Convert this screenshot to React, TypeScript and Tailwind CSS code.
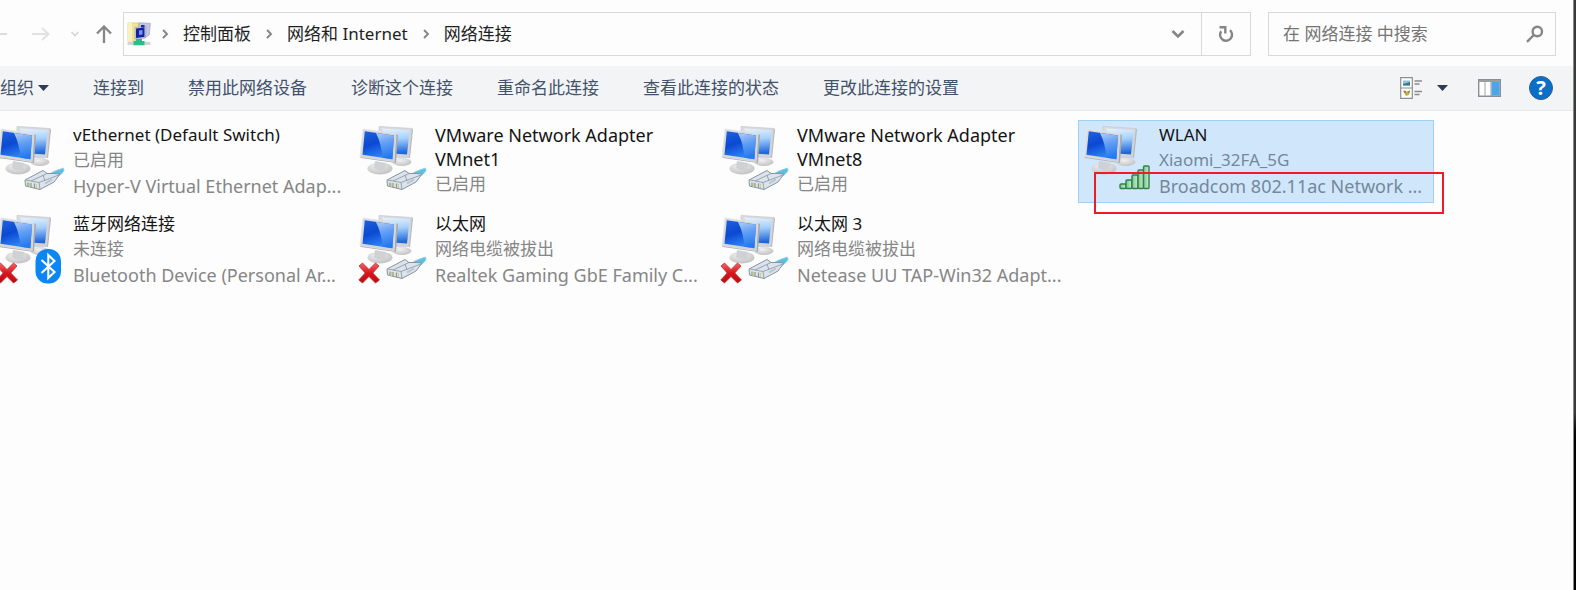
import type { ReactNode } from "react";

type Badge = "plug" | "bluetooth" | "wifi";

interface Connection {
  name: string;
  status: string;
  device?: string;
  badge: Badge;
  offline?: boolean;
  selected?: boolean;
}

const connections: Connection[] = [
  { name: "vEthernet (Default Switch)", status: "已启用", device: "Hyper-V Virtual Ethernet Adap...", badge: "plug" },
  { name: "VMware Network Adapter VMnet1", status: "已启用", badge: "plug" },
  { name: "VMware Network Adapter VMnet8", status: "已启用", badge: "plug" },
  { name: "WLAN", status: "Xiaomi_32FA_5G", device: "Broadcom 802.11ac Network ...", badge: "wifi", selected: true },
  { name: "蓝牙网络连接", status: "未连接", device: "Bluetooth Device (Personal Ar...", badge: "bluetooth", offline: true },
  { name: "以太网", status: "网络电缆被拔出", device: "Realtek Gaming GbE Family C...", badge: "plug", offline: true },
  { name: "以太网 3", status: "网络电缆被拔出", device: "Netease UU TAP-Win32 Adapt...", badge: "plug", offline: true },
];

const commands = ["连接到", "禁用此网络设备", "诊断这个连接", "重命名此连接", "查看此连接的状态", "更改此连接的设置"];

function Defs() {
  return (
    <svg width="0" height="0" className="absolute" aria-hidden="true">
      <defs>
        <linearGradient id="screen" x1="0" y1="0" x2="0.4" y2="1">
          <stop offset="0" stopColor="#1f63dc" />
          <stop offset="0.5" stopColor="#0b49d2" />
          <stop offset="1" stopColor="#2f86f6" />
        </linearGradient>
        <linearGradient id="glare" x1="0" y1="0" x2="0.2" y2="1">
          <stop offset="0" stopColor="#cfe6ff" />
          <stop offset="0.5" stopColor="#6ba8f8" />
          <stop offset="1" stopColor="#2277f0" />
        </linearGradient>
        <linearGradient id="back" x1="0" y1="0" x2="0.1" y2="1">
          <stop offset="0" stopColor="#e6f3ff" />
          <stop offset="0.45" stopColor="#a5d0fb" />
          <stop offset="1" stopColor="#1f66dc" />
        </linearGradient>
        <linearGradient id="frame" x1="0" y1="0" x2="1" y2="1">
          <stop offset="0" stopColor="#d9dce0" />
          <stop offset="1" stopColor="#d0d2d6" />
        </linearGradient>
        <radialGradient id="foot" cx="0.4" cy="0.3" r="0.8">
          <stop offset="0" stopColor="#f1f1f1" />
          <stop offset="1" stopColor="#bcbcbc" />
        </radialGradient>
        <linearGradient id="cross" x1="0" y1="0" x2="0" y2="1">
          <stop offset="0" stopColor="#f0686a" />
          <stop offset="0.5" stopColor="#d8161c" />
          <stop offset="1" stopColor="#b80d12" />
        </linearGradient>
        <linearGradient id="bar" x1="0" y1="0" x2="1" y2="0">
          <stop offset="0" stopColor="#7cc48f" />
          <stop offset="1" stopColor="#c6efcc" />
        </linearGradient>
      </defs>
    </svg>
  );
}

function ConnectionIcon({ badge, offline }: { badge: Badge; offline?: boolean }) {
  return (
    <svg viewBox="0 0 80 81" className="h-[81px] w-20 shrink-0" aria-hidden="true">
      <ellipse cx="47" cy="41" rx="9.5" ry="4" fill="url(#foot)" />
      <path d="M24 5.5 L57 7.5 L54 36.5 L24 36 Z" fill="url(#frame)" stroke="#c8cbd0" strokeWidth="0.8" />
      <path d="M27 7.6 L54.6 9.3 L52 33.5 L38 32.5 Z" fill="url(#back)" />
      <path d="M57 7.5 L58 8.5 L55 37.5 L54 36.5 Z" fill="#b5b8bd" />
      <ellipse cx="25" cy="47.5" rx="12.5" ry="6" fill="url(#foot)" />
      <path d="M20 40 L31 42 L30 49 Q24 51 19 47 Z" fill="#cfd1d4" />
      <path d="M8 8 L41.5 13 L39.5 41 L5 36 Z" fill="url(#frame)" stroke="#e2e4e7" strokeWidth="0.8" />
      <path d="M41.5 13 L43 14 L41 42 L39.5 41 Z" fill="#a7aaae" />
      <path d="M5 36 L39.5 41 L41 42 L6 37 Z" fill="#aeb1b5" />
      <path d="M9.8 10.2 L39 14.6 L37.4 38.2 L7.5 33.8 Z" fill="url(#screen)" />
      <path d="M21 11.9 L39 14.6 L37.4 38.2 L27.5 36.8 Q26.5 23 21 11.9 Z" fill="url(#glare)" opacity="0.85" />
      {badge === "plug" && (
        <g strokeLinejoin="round">
          <path d="M55 54 Q60 50 70.5 47 L71 49.5 Q69 54 60 58 Z" fill="#5dbfe0" stroke="#8ed3ea" strokeWidth="0.8" />
          <path d="M32 59 L50 49.5 L54 52.5 L61 52.5 L67 53 L61 61 L47 68.5 L32.5 65 Z" fill="#dce3ea" stroke="#8793a2" strokeWidth="1" />
          <path d="M33 59 L46 61.5 L47 68.5 M46 61.5 L66 54 M38 60 L54 52.5 M52 60 L50 54" fill="none" stroke="#909dad" strokeWidth="0.9" />
          <path d="M35 61.5 V65 M38 62 V66 M41.5 62.5 V67" stroke="#8f9a7c" strokeWidth="1.2" />
          <path d="M36.5 62 V66 M43.5 63 V67" stroke="#d3cf86" strokeWidth="1" />
          <path d="M52 62.5 L59 58.5" stroke="#b5c3d3" strokeWidth="2" />
        </g>
      )}
      {badge === "wifi" && (
        <g fill="url(#bar)" stroke="#2f8149" strokeWidth="1.4">
          <rect x="41" y="63" width="6" height="4.5" rx="1" />
          <rect x="47" y="59" width="6" height="8.5" rx="1" />
          <rect x="53" y="54" width="6" height="13.5" rx="1" />
          <rect x="59" y="49" width="5.5" height="18.5" rx="1" />
          <rect x="64.5" y="45" width="5.5" height="22.5" rx="1" />
        </g>
      )}
      {badge === "bluetooth" && (
        <g>
          <rect x="42.5" y="39" width="25.5" height="34.5" rx="12" fill="#0a86f5" />
          <path d="M48.5 50 L61.5 62 L55.3 68 V45 L61.5 51 L48.5 63" fill="none" stroke="#fff" strokeWidth="2.1" />
        </g>
      )}
      {offline && (
        <path
          d="M7.5 53 L14 59.5 L20.5 53 L24 56 L17.8 63 L24.5 70 L20.5 73 L14 66.5 L7.5 73 L3.8 70 L10.2 63 L4 56 Z"
          fill="url(#cross)"
          stroke="#c22a2e"
          strokeWidth="0.8"
          strokeLinejoin="round"
        />
      )}
    </svg>
  );
}

function Chevron() {
  return (
    <svg viewBox="0 0 8 10" className="h-2.5 w-2 shrink-0" aria-hidden="true">
      <path d="M2 1 L6 5 L2 9" fill="none" stroke="#858585" strokeWidth="1.9" />
    </svg>
  );
}

function Triangle() {
  return (
    <svg viewBox="0 0 11 6" className="h-1.5 w-[11px] shrink-0" aria-hidden="true">
      <path d="M0 0 H11 L5.5 6 Z" fill="#2b3c56" />
    </svg>
  );
}

function IconButton({ label, className, children }: { label: string; className?: string; children: ReactNode }) {
  return (
    <button type="button" aria-label={label} className={`flex shrink-0 items-center justify-center ${className ?? ""}`}>
      {children}
    </button>
  );
}

function AddressBar() {
  return (
    <header className="flex items-center pt-3 pr-[17px] pb-[10px]">
      <nav className="flex w-[123px] shrink-0 items-center" aria-label="导航">
        <IconButton label="后退" className="w-2">
          <svg viewBox="0 0 8 18" className="h-[18px] w-2">
            <path d="M0 9 H7" stroke="#dcdcdc" strokeWidth="2" />
          </svg>
        </IconButton>
        <IconButton label="前进" className="ml-6 w-[18px]">
          <svg viewBox="0 0 18 18" className="h-[18px] w-[18px]">
            <path d="M0 9 H16 M10 3 L16.5 9 L10 15" fill="none" stroke="#e2e2e2" strokeWidth="2" />
          </svg>
        </IconButton>
        <IconButton label="最近位置" className="ml-5 w-2.5">
          <svg viewBox="0 0 10 8" className="h-2 w-2.5">
            <path d="M1.5 2 L5 5.5 L8.5 2" fill="none" stroke="#d6d6d6" strokeWidth="1.6" />
          </svg>
        </IconButton>
        <IconButton label="向上" className="ml-4 w-4">
          <svg viewBox="0 0 16 18" className="h-[18px] w-4">
            <path d="M8 18 V2 M1 8.5 L8 1.5 L15 8.5" fill="none" stroke="#868686" strokeWidth="2.3" />
          </svg>
        </IconButton>
      </nav>
      <div className="flex h-11 min-w-0 flex-1 items-stretch border border-[#d9d9d9]">
        <div className="flex min-w-0 flex-1 items-center pl-[3px] text-[17px] whitespace-nowrap text-[#1f1f1f]">
          <svg viewBox="0 0 24 24" className="h-6 w-6 shrink-0" aria-hidden="true">
            <path d="M1 1 H12 V19 H1 Z" fill="#efe590" stroke="#d8cf86" strokeWidth="0.8" />
            <path d="M1 1 H5 V19 H1 Z" fill="#f7f2bb" />
            <path d="M12 0.8 L23.3 1.4 L22.3 13 L19 15 L11 14 Z" fill="#c3c8e0" stroke="#a3a8c4" strokeWidth="0.8" />
            <path d="M8 5.5 L19 4.5 L18.5 16 L8 17 Z" fill="#cfd3e6" stroke="#a0a5ba" strokeWidth="0.8" />
            <path d="M9 6.5 L17.5 5.5 V15 L9 16 Z" fill="#161fa8" />
            <path d="M12 8.5 L15.5 8 V12.5 L12 13 Z" fill="#6c9af0" />
            <path d="M14 3 H17.5 V5.5 H14 Z" fill="#232a9c" />
            <path d="M0.5 19.8 H23.5 V23 H0.5 Z" fill="#d0d4d8" />
            <path d="M9 17 H15 V19 H17.5 V23.2 H6.5 V19 H9 Z" fill="#22c08a" />
          </svg>
          <ol className="flex items-center gap-[14px] pl-[10px]">
            <li className="flex items-center gap-[14px]">
              <Chevron />
              <a href="#control-panel">控制面板</a>
            </li>
            <li className="flex items-center gap-[14px]">
              <Chevron />
              <a href="#internet">网络和 Internet</a>
            </li>
            <li className="flex items-center gap-[14px]">
              <Chevron />
              <a href="#connections">网络连接</a>
            </li>
          </ol>
        </div>
        <IconButton label="以前的位置" className="w-[47px]">
          <svg viewBox="0 0 14 10" className="h-2.5 w-3.5">
            <path d="M1.5 2 L7 7.5 L12.5 2" fill="none" stroke="#858585" strokeWidth="2.6" />
          </svg>
        </IconButton>
        <IconButton label="刷新" className="w-[49px] border-l border-[#d9d9d9]">
          <svg viewBox="0 0 16 18" className="h-[18px] w-4">
            <path d="M12 5.2 A6 6 0 1 1 3.2 6.2" fill="none" stroke="#858585" strokeWidth="2.4" />
            <path d="M1.5 2.2 H7.3 V8.5" fill="none" stroke="#858585" strokeWidth="2.4" />
          </svg>
        </IconButton>
      </div>
      <label className="ml-[17px] flex h-11 w-72 items-center border border-[#d9d9d9] pr-[11px] pl-[14px]">
        <input
          type="search"
          aria-label="在 网络连接 中搜索"
          placeholder="在 网络连接 中搜索"
          className="min-w-0 flex-1 bg-transparent text-[17px] outline-none placeholder:text-[#757575]"
        />
        <svg viewBox="0 0 18 18" className="h-[18px] w-[18px] shrink-0" aria-hidden="true">
          <circle cx="11.3" cy="6.5" r="4.7" fill="none" stroke="#868686" strokeWidth="2.4" />
          <path d="M7.8 10 L1 16.8" stroke="#868686" strokeWidth="2.4" />
        </svg>
      </label>
    </header>
  );
}

function CommandBar() {
  return (
    <div className="flex h-[45px] items-center justify-between border-b border-[#e6e8eb] bg-[#f3f4f6] pr-5 text-[17px] whitespace-nowrap text-[#42526a]">
      <div className="flex items-center gap-11">
        <button type="button" className="flex items-center gap-1">
          组织
          <Triangle />
        </button>
        {commands.map((command) => (
          <button key={command} type="button">
            {command}
          </button>
        ))}
      </div>
      <div className="flex items-center">
        <IconButton label="更改视图">
          <svg viewBox="0 0 22 22" className="h-[22px] w-[22px]">
            <path d="M0.7 0.7 H12.3 V21.3 H0.7 Z M0.7 11 H12.3" fill="#fff" stroke="#8e8e8e" strokeWidth="1.2" />
            <path d="M3 3.5 H10 V8.5 H3 Z" fill="#8fbfe8" />
            <path d="M3 8.5 V7 L7 6 L10 5 V8.5 Z" fill="#3a7a78" />
            <path d="M3 14 L6 15 L10 13.5 L9 18 L6 19 Z" fill="#c9b23c" />
            <path d="M3 13.5 L6 14 L5.5 16.5 Z" fill="#c0506a" />
            <path d="M7 15 L10 13.5 L9.5 16 Z" fill="#4d9a4d" />
            <path d="M14.5 4 H22 M14.5 7 H19.5 M14.5 14.5 H22 M14.5 17.5 H19.5" stroke="#8a8a8a" strokeWidth="1.4" />
          </svg>
        </IconButton>
        <IconButton label="更多选项" className="ml-[15px]">
          <Triangle />
        </IconButton>
        <IconButton label="预览窗格" className="ml-[30px]">
          <svg viewBox="0 0 23 18" className="h-[18px] w-[23px]">
            <path d="M0.7 0.7 H22.3 V17.3 H0.7 Z" fill="#fff" stroke="#8b8f94" strokeWidth="1.4" />
            <path d="M1 1 H22 V3 H1 Z" fill="#9a9ea3" />
            <path d="M7 3 V17" stroke="#a9a9a9" strokeWidth="1.1" />
            <path d="M13.5 3 H21.7 V16.7 H13.5 Z" fill="#4ba6e6" />
            <path d="M13 3 V17" stroke="#7c9cb8" strokeWidth="1" />
          </svg>
        </IconButton>
        <IconButton label="帮助" className="ml-7 h-6 w-6 rounded-full border border-[#2c5f93] bg-[#0a6fc9] text-[20px] leading-none font-bold text-white">
          ?
        </IconButton>
      </div>
    </div>
  );
}

function ConnectionTile({ connection }: { connection: Connection }) {
  const { name, status, device, badge, offline, selected } = connection;
  const muted = selected ? "text-[#75879a]" : "text-[#868686]";
  return (
    <li className="relative">
      <button
        type="button"
        aria-pressed={selected ?? false}
        className={`flex h-[83px] w-full items-start border text-left ${
          selected ? "border-[#9fd0f5] bg-[#d0e7fb]" : "border-transparent"
        }`}
      >
        <ConnectionIcon badge={badge} offline={offline} />
        <span className="flex min-w-0 flex-1 flex-col pt-0.5 pr-2">
          <span className={`leading-6 text-[#141414] ${device ? "text-[17px]" : "text-[18px]"}`}>{name}</span>
          <span className={`text-[17px] leading-[26px] whitespace-nowrap ${muted}`}>{status}</span>
          {device && <span className={`text-[18px] leading-[26px] whitespace-nowrap ${muted}`}>{device}</span>}
        </span>
      </button>
      {selected && (
        <span className="pointer-events-none absolute top-[52px] left-4 h-[42px] w-[350px] border-2 border-[#ee1c25]" />
      )}
    </li>
  );
}

export default function App() {
  return (
    <div className="flex min-h-screen overflow-hidden bg-[#fdfdfd] font-['Noto_Sans','Noto_Sans_CJK_SC',sans-serif]">
      <Defs />
      <div className="min-w-0 flex-1">
        <AddressBar />
        <CommandBar />
        <main className="pt-[9px]">
          <ul className="-ml-2 grid grid-cols-[repeat(auto-fill,356px)] gap-x-1.5 gap-y-1.5">
            {connections.map((connection) => (
              <ConnectionTile key={connection.name} connection={connection} />
            ))}
          </ul>
        </main>
      </div>
      <div className="w-[3px] shrink-0 border-l border-[#8a8a8a] bg-linear-to-b from-[#3a3a3a] from-70% to-black to-75%" />
    </div>
  );
}
